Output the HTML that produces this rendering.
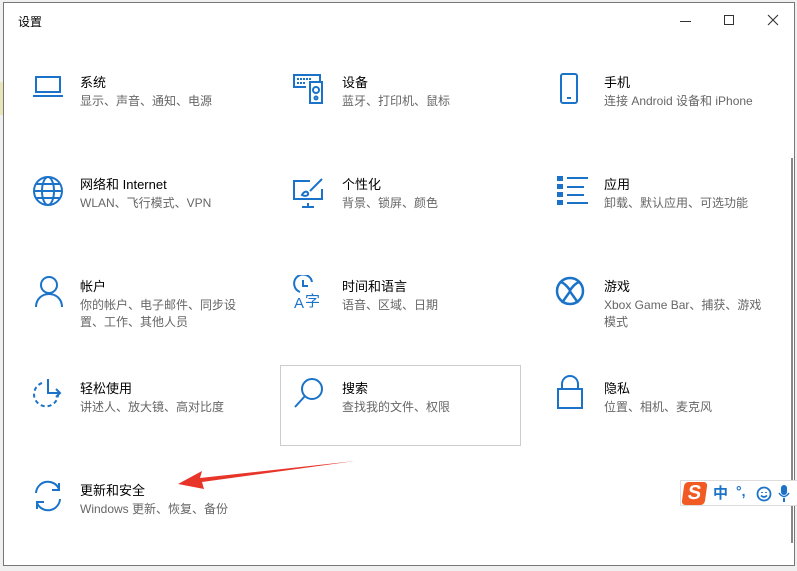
<!DOCTYPE html>
<html><head><meta charset="utf-8"><style>
*{margin:0;padding:0;box-sizing:border-box}
body{width:797px;height:571px;background:#f0f0f0;position:relative;overflow:hidden;font-family:"Liberation Sans","Noto Sans CJK SC",sans-serif}
.strip{position:absolute;left:0;top:82px;width:4px;height:33px;background:#e8e6b8}
.win{position:absolute;left:3px;top:2px;width:792px;height:564px;background:#fff;border:1px solid #777}
.t{position:absolute;font-size:12px;color:#000;left:14px;top:10px}
.ctl{position:absolute;top:8px;font-size:14px;color:#333}
.item{position:absolute}
.item .h{position:absolute;left:0;top:0;font-size:13px;color:#000;white-space:nowrap;line-height:16px}
.item .s{position:absolute;left:0;top:18px;font-size:12px;color:#666;white-space:nowrap;line-height:17px}
svg.ic{position:absolute}
.hover{position:absolute;left:276px;top:362px;width:241px;height:81px;border:1px solid #ccc}
.sb{position:absolute;left:787px;top:155px;width:2px;height:385px;background:#888}
.ime{position:absolute;left:680px;top:480px;width:117px;height:26px;background:#fff;border:1px solid #ddd;border-right:none}
</style></head><body>
<div class="strip"></div>
<div class="win">
<div class="t">设置</div>
<div style="position:absolute;left:676px;top:18px;width:11px;height:1px;background:#333"></div>
<div style="position:absolute;left:720px;top:12px;width:10px;height:10px;border:1px solid #333"></div>
<svg style="position:absolute;left:763px;top:11px" width="12" height="12"><path d="M1 1L11 11M11 1L1 11" stroke="#333" stroke-width="1.1"/></svg>
<div class="sb"></div>
<div class="hover"></div>

<svg class="ic" style="left:28px;top:72px" width="34" height="24" fill="none" stroke="#1a73c9" stroke-width="2"><rect x="4" y="2" width="24" height="15"/><path d="M1 21h30"/></svg>
<div class="item" style="left:76px;top:72px"><div class="h">系统</div><div class="s">显示、声音、通知、电源</div></div>

<svg class="ic" style="left:288px;top:70px" width="32" height="32" fill="none" stroke="#1a73c9" stroke-width="2"><path d="M14 14H2V2h26v6"/><path d="M5 6h14M5 10h8" stroke-dasharray="2 1"/><rect x="18" y="9" width="12" height="21"/><circle cx="24" cy="17" r="3"/><circle cx="24" cy="25" r="1.5"/></svg>
<div class="item" style="left:338px;top:72px"><div class="h">设备</div><div class="s">蓝牙、打印机、鼠标</div></div>

<svg class="ic" style="left:555px;top:70px" width="20" height="32" fill="none" stroke="#1a73c9" stroke-width="2"><rect x="2" y="1" width="16" height="29" rx="2"/><path d="M8 25h4"/></svg>
<div class="item" style="left:600px;top:72px"><div class="h">手机</div><div class="s">连接 Android 设备和 iPhone</div></div>

<svg class="ic" style="left:28px;top:172px" width="32" height="32" fill="none" stroke="#1a73c9" stroke-width="2"><circle cx="16" cy="16" r="14"/><ellipse cx="16" cy="16" rx="6" ry="14"/><path d="M2 16h28M4 9h24M4 23h24"/></svg>
<div class="item" style="left:76px;top:174px"><div class="h">网络和 Internet</div><div class="s">WLAN、飞行模式、VPN</div></div>

<svg class="ic" style="left:288px;top:174px" width="34" height="32" fill="none" stroke="#1a73c9" stroke-width="2"><path d="M18 4H2v18h28V12"/><path d="M16 26v4M10 30h12"/><path d="M30 2l-12 12M10 18c2-4 5-4 6-2s-2 4-6 2z"/></svg>
<div class="item" style="left:338px;top:174px"><div class="h">个性化</div><div class="s">背景、锁屏、颜色</div></div>

<svg class="ic" style="left:552px;top:172px" width="34" height="32" fill="#1a73c9"><rect x="1" y="1" width="6" height="5"/><rect x="1" y="9" width="6" height="5"/><rect x="1" y="17" width="6" height="5"/><rect x="1" y="25" width="6" height="5"/><rect x="11" y="2" width="21" height="2"/><rect x="11" y="11" width="17" height="2"/><rect x="11" y="19" width="17" height="2"/><rect x="11" y="27" width="21" height="2"/></svg>
<div class="item" style="left:600px;top:174px"><div class="h">应用</div><div class="s">卸载、默认应用、可选功能</div></div>

<svg class="ic" style="left:30px;top:272px" width="30" height="34" fill="none" stroke="#1a73c9" stroke-width="2"><circle cx="15" cy="10" r="8"/><path d="M2 32c0-8 6-13 13-13s13 5 13 13"/></svg>
<div class="item" style="left:76px;top:276px"><div class="h">帐户</div><div class="s">你的帐户、电子邮件、同步设<br>置、工作、其他人员</div></div>

<svg class="ic" style="left:288px;top:272px" width="36" height="36" fill="none" stroke="#1a73c9" stroke-width="2"><path d="M8 17a9 9 0 1 1 12-10"/><path d="M11 5v6h5"/><text x="2" y="33" font-size="15" fill="#1a73c9" stroke="none" font-family="Liberation Sans">A</text><text x="13" y="31" font-size="15" fill="#1a73c9" stroke="none" font-family="Noto Sans CJK SC">字</text></svg>
<div class="item" style="left:338px;top:276px"><div class="h">时间和语言</div><div class="s">语音、区域、日期</div></div>

<svg class="ic" style="left:550px;top:272px" width="32" height="32" fill="none" stroke="#1a73c9" stroke-width="2.5"><circle cx="16" cy="16" r="13"/><path d="M7 7c5 2 9 8 9 9s-5 7-8 12M25 7c-5 2-9 8-9 9s5 7 8 12"/></svg>
<div class="item" style="left:600px;top:276px"><div class="h">游戏</div><div class="s">Xbox Game Bar、捕获、游戏<br>模式</div></div>

<svg class="ic" style="left:28px;top:374px" width="34" height="32" fill="none" stroke="#1a73c9" stroke-width="2"><path d="M10 6a12 12 0 1 0 16 12" stroke-dasharray="4 3"/><path d="M16 2v14h12M24 12l4 4-4 4"/></svg>
<div class="item" style="left:76px;top:378px"><div class="h">轻松使用</div><div class="s">讲述人、放大镜、高对比度</div></div>

<svg class="ic" style="left:288px;top:374px" width="34" height="34" fill="none" stroke="#1a73c9" stroke-width="2"><circle cx="20" cy="12" r="10"/><path d="M13 19L3 30"/></svg>
<div class="item" style="left:338px;top:378px"><div class="h">搜索</div><div class="s">查找我的文件、权限</div></div>

<svg class="ic" style="left:552px;top:372px" width="28" height="36" fill="none" stroke="#1a73c9" stroke-width="2"><path d="M6 14V9a8 8 0 0 1 16 0v5"/><rect x="2" y="14" width="24" height="19"/></svg>
<div class="item" style="left:600px;top:378px"><div class="h">隐私</div><div class="s">位置、相机、麦克风</div></div>

<svg class="ic" style="left:27px;top:476px" width="34" height="34" fill="none" stroke="#1a73c9" stroke-width="2"><path d="M5 14A12 12 0 0 1 28 10M29 20A12 12 0 0 1 6 24"/><path d="M28 4v7h-7M6 30v-7h7"/></svg>
<div class="item" style="left:76px;top:480px"><div class="h">更新和安全</div><div class="s">Windows 更新、恢复、备份</div></div>
</div>

<svg style="position:absolute;left:0;top:0" width="797" height="571"><path d="M355 461L200 478L202 471L178 484L204 489L202 482Z" fill="#e8352a"/></svg>

<div class="ime">
<div style="position:absolute;left:2px;top:1px;width:23px;height:23px;background:#f15a22;border-radius:4px;color:#fff;font-weight:bold;font-size:20px;line-height:23px;text-align:center;transform:skewX(-8deg)">S</div>
<div style="position:absolute;left:32px;top:3px;font-size:15px;font-weight:bold;color:#1a73c9;font-family:'Noto Sans CJK SC',sans-serif;line-height:18px">中</div>
<div style="position:absolute;left:55px;top:2px;font-size:14px;font-weight:bold;color:#1a73c9">°,</div>
<svg style="position:absolute;left:75px;top:5px" width="16" height="16" fill="none" stroke="#1a73c9" stroke-width="1.8"><circle cx="8" cy="8" r="6.5"/><path d="M5 9.5q3 3 6 0"/><path d="M6 6v1M10 6v1"/></svg>
<svg style="position:absolute;left:97px;top:3px" width="12" height="20" fill="#1a73c9"><rect x="3" y="1" width="6" height="10" rx="3"/><path d="M1 9q5 7 10 0" stroke="#1a73c9" stroke-width="1.5" fill="none"/><rect x="5" y="14" width="2" height="4"/></svg>
</div>
</body></html>
